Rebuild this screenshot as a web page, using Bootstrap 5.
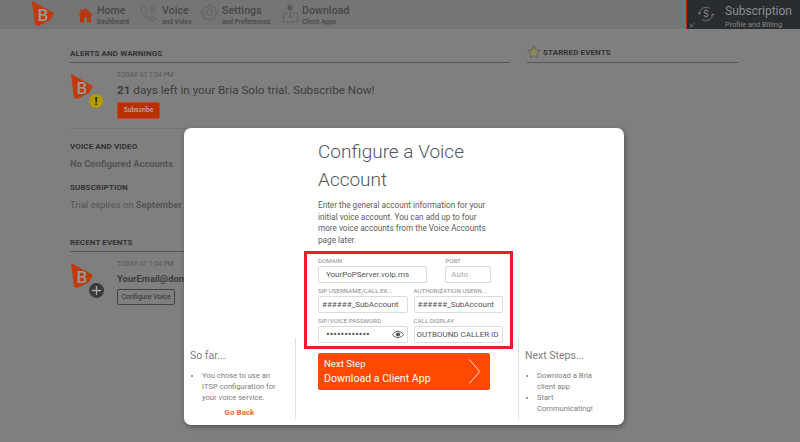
<!DOCTYPE html>
<html lang="en">
<head>
<meta charset="utf-8">
<title>Bria - Configure a Voice Account</title>
<link href="https://cdn.jsdelivr.net/npm/bootstrap@5.3.0/dist/css/bootstrap.min.css" rel="stylesheet">
<style>
html,body{height:442px;overflow:hidden}
body{background:#7f7f7f;font-family:Roboto,"Liberation Sans",sans-serif;color:#404040;font-size:9px}
.top-bar{height:29px;background:#757575}
.brand-logo{margin-left:31px;margin-right:24px;margin-top:1px}
.nav-entry{color:#474747;line-height:1}
.nav-entry svg{flex:none}
.nav-entry b{display:block;font-size:10.5px;font-weight:500;margin-top:6px;letter-spacing:.1px}
.nav-entry small{display:block;font-size:6.6px;font-weight:700;margin-top:2px;color:#4d4d4d}
.nav-home{width:62px}.nav-voice{width:61px}.nav-settings{width:82px}.nav-download{width:100px}
.sub-box{width:114px;background:#2a2d2f;border-left:1px solid #a5300a;color:#8c8c8c;line-height:1;margin-left:auto}
.sub-box>svg{margin:5px 10px 0 10px;flex:none}
.sub-box b{display:block;font-size:12px;font-weight:400;margin-top:5px}
.sub-box small{display:block;font-size:7.4px;margin-top:4px;color:#858585}
.sub-arrow{position:absolute;left:3px;bottom:2px;margin:0!important}
.page-body{padding:17px 0 0 70px;gap:17px}
.main-col{width:440px;flex:none}
.side-col{width:211px;flex:none}
.sec-head{font-size:8px;font-weight:700;color:#333;border-bottom:1px solid #555;height:17px;line-height:15px;letter-spacing:.1px;margin:0}
.sec-plain{font-size:8px;font-weight:700;color:#333;line-height:10px;letter-spacing:.1px;margin:0}
.alert-block{height:66px;border-bottom:1px solid #747468;padding-top:7px}
.icon-slot{width:47px;flex:none;position:relative;margin-top:4px}
.stamp{font-size:6.5px;color:#555;line-height:10px;letter-spacing:.1px}
.alert-msg{font-size:11.7px;color:#3d3d3d;line-height:15px;margin-top:3px;white-space:nowrap}
.alert-msg b{font-weight:700}
.sub-btn{background:#b83000;border:1px solid #c0491f;color:#b8a09a;font-size:6.6px;font-weight:700;padding:0;width:43px;height:17px;line-height:15px;border-radius:2px;margin-top:4px;display:block}
.info-val{font-size:9.4px;color:#545454;line-height:12px;white-space:nowrap;margin-top:6px}
.info-val.strong,.info-val b{font-weight:700}
.gap-voice{margin-top:13px}
.gap-sub{margin-top:13px}
.gap-recent{margin-top:24px}
.recent-row{padding-top:7px}
.mail-val{color:#3d3d3d;margin-top:4px}
.cfg-btn{background:transparent;border:1px solid #444;color:#2f2f2f;font-size:7px;padding:0;width:58px;height:16px;line-height:14px;border-radius:2px;display:block;margin-top:4px}
.mini-badge{position:absolute;left:19px;top:20px}
.star-head{display:flex;align-items:flex-start;gap:2px}
.star-head svg{margin-top:-1px}
.star-head span{margin-top:-1px}
.dlg-layer{position:absolute;left:184px;top:128px;width:440px;height:297px}
.dlg-card{height:297px;background:#fff;border-radius:7px;box-shadow:1px 2px 5px rgba(0,0,0,.35);color:#555;overflow:hidden}
.dlg-left{width:112px;flex:none;padding-bottom:6px}
.dlg-center{width:222px;flex:none;padding-top:10px}
.dlg-right{flex:1;padding-bottom:5px}
.note-left{height:81px;border-right:1px solid #e3e3dd;padding:11px 16px 0 6px;color:#7d7d7d}
.note-right{height:82px;border-left:1px solid #e3e3dd;padding:11px 24px 0 6px;color:#7d7d7d}
.note-title{font-size:10.5px;font-weight:400;color:#808080;line-height:13px;margin:0 0 8px}
.note-list{margin:0;padding-left:12px;font-size:7.6px;line-height:11.1px}
.go-back{display:block;text-align:center;color:#f7693a;font-weight:700;font-size:8px;margin:4px -10px 0 0;text-decoration:none}
.dlg-title{font-size:19px;font-weight:300;color:#50565c;line-height:28px;margin:0 0 6px 22px;width:190px}
.dlg-text{font-size:8.2px;line-height:11.7px;color:#5c5c5c;margin:0 0 4px 22px;width:172px}
.field-box{border:3px solid #ed1c2c;margin-left:8px;width:209px;height:98px;padding:3px 7px 0 11px;display:grid;grid-template-columns:repeat(12,1fr);grid-auto-rows:30px;column-gap:6px}
.fld{min-width:0}
.fld label{display:block;font-size:6.2px;line-height:9px;color:#8a8a8a;white-space:nowrap;margin:0}
.fld .form-control{height:17px;font-size:8px;padding:0 3px;border-radius:2px;border:1px solid #dcdcdc;color:#555;font-family:inherit;line-height:15px;box-shadow:none}
.fld .form-control::placeholder{color:#a8a8a8}
.fld-domain{grid-column:span 8}.fld-port{grid-column:span 4}
.fld-half{grid-column:span 6}
.fld-domain .form-control{padding-left:7px;width:109px}
.fld-port .form-control{padding-left:5px;width:46px}
.pw-wrap{position:relative}
.pw-wrap .form-control{padding-left:7px;font-size:10.8px}
.pw-eye{position:absolute;right:4px;top:3px}
.fld .call-input{padding-left:2px;padding-right:0}
.next-btn{margin:4px 0 0 22px;width:172px;height:37px;background:#ff4800;border:0;border-radius:2px;color:#fff;text-align:left;padding:5px 6px;position:relative;line-height:1}
.next-btn span{display:block;font-size:9.6px;line-height:12px}
.next-btn strong{display:block;font-size:10.6px;font-weight:400;line-height:15px;margin-top:1px}
.next-btn svg{position:absolute;right:9px;top:6px}
</style>
</head>
<body>
<svg width="0" height="0" class="position-absolute">
  <defs>
    <g id="bria">
      <polygon points="1,0 23,12 19,19 7.300,25 4,24" fill="#c03a0c"/>
      <text x="11.800" y="19.500" text-anchor="middle" font-family="Roboto,sans-serif" font-weight="500" font-size="17" fill="#9a9a9a">B</text>
    </g>
  </defs>
</svg>

<header class="top-bar d-flex">
  <svg class="brand-logo" width="23" height="26" viewBox="0 0 23 26"><use href="#bria"/></svg>
  <a class="nav-entry nav-home d-flex gap-1 text-decoration-none">
    <svg width="15" height="15" viewBox="0 0 15 15" class="mt-2"><path d="M7.500 0 15 7h-2v7.500H9V9.500H6v5H2V7H0L2.500 4.700V1.200h2v1.700z" fill="#b5370c"/></svg>
    <span><b>Home</b><small>Dashboard</small></span>
  </a>
  <a class="nav-entry nav-voice d-flex gap-1 text-decoration-none">
    <svg width="18" height="18" viewBox="0 0 18 18" class="mt-1" fill="none" stroke="#5a5a5a" stroke-width=".7"><path d="M2 2c-1.500 1-1.500 3 0 6 2 4 5 7 9 8.500 2 .7 4 .3 5-1.500l-3.500-2.500-1.800 1.300C8.500 12.500 6 10 5 7.500L6.500 5.500 4 1z"/><circle cx="12.500" cy="5.500" r="1.700"/><circle cx="12.500" cy="5.500" r="3.700" stroke-dasharray="1.500 1"/></svg>
    <span><b>Voice</b><small>and Video</small></span>
  </a>
  <a class="nav-entry nav-settings d-flex gap-1 text-decoration-none">
    <svg width="17" height="17" viewBox="0 0 17 17" class="mt-1" fill="none" stroke="#5a5a5a" stroke-width=".8"><circle cx="8.500" cy="8.500" r="3"/><path d="M7.300 1h2.400l.4 2 1.400.6 1.800-1.100 1.700 1.700-1.100 1.800.6 1.400 2 .4v2.400l-2 .4-.6 1.400 1.100 1.800-1.700 1.700-1.800-1.100-1.400.6-.4 2H7.300l-.4-2-1.400-.6-1.800 1.100L2 13.800l1.100-1.800-.6-1.400-2-.4V7.800l2-.4.6-1.400L2 4.200 3.700 2.500l1.800 1.100 1.400-.6z"/></svg>
    <span><b>Settings</b><small>and Preferences</small></span>
  </a>
  <a class="nav-entry nav-download d-flex gap-1 text-decoration-none">
    <svg width="15" height="19" viewBox="0 0 15 19" class="mt-1" fill="none" stroke="#5a5a5a" stroke-width=".8"><path d="M5 1h2.500l1.500 1.500V6H5z" fill="#5a5a5a"/><path d="M5 9H.5v9h14V9H10"/><path d="M7.500 7v7M5.500 12l2 2 2-2"/></svg>
    <span><b>Download</b><small>Client Apps</small></span>
  </a>
  <a class="sub-box d-flex text-decoration-none position-relative">
    <svg width="18" height="18" viewBox="0 0 20 20" fill="none" stroke="#8c8c8c" stroke-width=".8"><path d="M2.500 10a7.500 7.500 0 0 1 11.500-6.300M17.500 10a7.500 7.500 0 0 1-11.500 6.300"/><path d="M.8 8.300l1.700 2 1.700-2M15.800 11.700l1.700-2 1.700 2"/><text x="10" y="13.800" text-anchor="middle" font-family="Roboto,sans-serif" font-size="10.500" fill="#8c8c8c" stroke="none">$</text></svg>
    <span><b>Subscription</b><small>Profile and Billing</small></span>
    <svg class="sub-arrow" width="5" height="5" viewBox="0 0 5 5" fill="none" stroke="#777" stroke-width=".7"><path d="M4.500.5.500 4.500M.5 1.800v2.700h2.700"/></svg>
  </a>
</header>

<main class="page-body d-flex">
  <div class="main-col">
    <h2 class="sec-head">ALERTS AND WARNINGS</h2>
    <div class="alert-block d-flex">
      <div class="icon-slot">
        <svg width="23" height="26" viewBox="0 0 23 26" class="d-block"><use href="#bria"/></svg>
        <svg class="mini-badge" width="14" height="14" viewBox="0 0 14 14"><circle cx="7" cy="7" r="7" fill="#b39b00"/><text x="7" y="11" text-anchor="middle" font-family="Roboto,sans-serif" font-weight="700" font-size="11" fill="#222">!</text></svg>
      </div>
      <div>
        <div class="stamp">TODAY AT 1:04 PM</div>
        <div class="alert-msg"><b>21</b> days left in your Bria Solo trial. Subscribe Now!</div>
        <button class="sub-btn" type="button">Subscribe</button>
      </div>
    </div>
    <h3 class="sec-plain gap-voice">VOICE AND VIDEO</h3>
    <div class="info-val strong">No Configured Accounts</div>
    <h3 class="sec-plain gap-sub">SUBSCRIPTION</h3>
    <div class="info-val">Trial expires on <b>September 30, 2021</b></div>
    <h2 class="sec-head gap-recent">RECENT EVENTS</h2>
    <div class="d-flex recent-row">
      <div class="icon-slot">
        <svg width="23" height="26" viewBox="0 0 23 26" class="d-block"><use href="#bria"/></svg>
        <svg class="mini-badge" width="15" height="15" viewBox="0 0 15 15"><circle cx="7.500" cy="7.500" r="7.500" fill="#3b3b3b"/><path d="M7.500 3v9M3 7.500h9" stroke="#aaa" stroke-width="1.300"/></svg>
      </div>
      <div>
        <div class="stamp">TODAY AT 1:04 PM</div>
        <div class="info-val strong mail-val">YourEmail@domain.com</div>
        <button class="cfg-btn" type="button">Configure Voice</button>
      </div>
    </div>
  </div>
  <div class="side-col">
    <h2 class="sec-head star-head">
      <svg width="14" height="14" viewBox="0 0 14 14"><path d="M7 .8 8.900 5l4.500.4-3.400 3 1 4.500L7 10.600 3 12.900l1-4.500-3.400-3L5.100 5z" fill="#8f8a57" stroke="#555" stroke-width=".7"/></svg>
      <span>STARRED EVENTS</span>
    </h2>
  </div>
</main>

<div class="dlg-layer">
  <div class="dlg-card d-flex">
    <aside class="dlg-left d-flex flex-column justify-content-end">
      <div class="note-left">
        <h5 class="note-title">So far...</h5>
        <ul class="note-list"><li>You chose to use an ITSP configuration for your voice service.</li></ul>
        <a class="go-back" href="#">Go Back</a>
      </div>
    </aside>
    <section class="dlg-center">
      <h1 class="dlg-title">Configure a Voice Account</h1>
      <p class="dlg-text">Enter the general account information for your initial voice account. You can add up to four more voice accounts from the Voice Accounts page later.</p>
      <form class="field-box">
        <div class="fld fld-domain"><label>DOMAIN</label><input class="form-control" value="YourPoPServer.voip.ms"></div>
        <div class="fld fld-port"><label>PORT</label><input class="form-control" placeholder="Auto"></div>
        <div class="fld fld-half"><label>SIP USERNAME/CALL EX...</label><input class="form-control" value="######_SubAccount"></div>
        <div class="fld fld-half"><label>AUTHORIZATION USERN...</label><input class="form-control" value="######_SubAccount"></div>
        <div class="fld fld-half"><label>SIP/VOICE PASSWORD</label>
          <div class="pw-wrap"><input class="form-control" type="password" value="abcdefghijkl">
            <svg class="pw-eye" width="12" height="11" viewBox="0 0 13 11"><path d="M.5 5.500C3.500 1 9.500 1 12.500 5.500 9.500 10 3.500 10 .5 5.500z" fill="none" stroke="#555"/><circle cx="6.500" cy="5.500" r="2.300" fill="#555"/></svg>
          </div>
        </div>
        <div class="fld fld-half"><label>CALL DISPLAY</label><input class="form-control call-input" value="OUTBOUND CALLER ID"></div>
      </form>
      <button class="next-btn" type="button">
        <span>Next Step</span><strong>Download a Client App</strong>
        <svg width="13" height="25" viewBox="0 0 13 26" fill="none" stroke="#fff" stroke-width=".9"><path d="M1 .5 12 13 1 25.500"/></svg>
      </button>
    </section>
    <aside class="dlg-right d-flex flex-column justify-content-end">
      <div class="note-right">
        <h5 class="note-title">Next Steps...</h5>
        <ul class="note-list"><li>Download a Bria client app</li><li>Start Communicating!</li></ul>
      </div>
    </aside>
  </div>
</div>
<script src="https://cdn.jsdelivr.net/npm/bootstrap@5.3.0/dist/js/bootstrap.bundle.min.js"></script>
</body>
</html>
